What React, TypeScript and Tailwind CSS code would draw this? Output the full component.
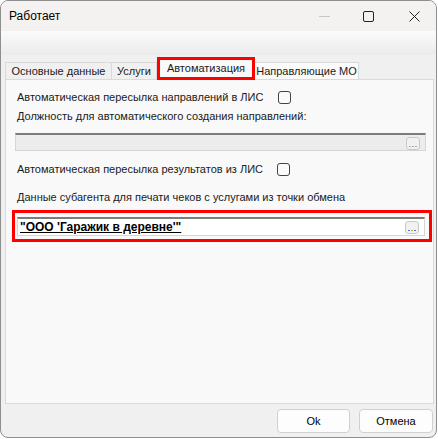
import React from "react";

function Checkbox() {
  return <div className="w-[13px] h-[13px] rounded-[3px] border border-[#444] bg-[#fbfbfb]" />;
}

function DotsButton({ colored }: { colored?: boolean }) {
  return (
    <div className="absolute right-[5px] top-[2px] w-[14px] h-[13px] rounded-[3px] border border-[#c9c9c9] bg-[#f1f1f1] flex items-end justify-center pb-[2px] gap-[1px]">
      <div className={`w-[2px] h-[1px] ${colored ? "bg-[#3d7fd8]" : "bg-[#b0b0b0]"}`} />
      <div className={`w-[2px] h-[1px] ${colored ? "bg-[#e0a020]" : "bg-[#b0b0b0]"}`} />
      <div className={`w-[2px] h-[1px] ${colored ? "bg-[#3d7fd8]" : "bg-[#b0b0b0]"}`} />
    </div>
  );
}

export default function App() {
  const font = { fontFamily: '"Liberation Sans", Arial, sans-serif' };
  return (
    <div className="w-[438px] h-[439px] bg-white" style={font}>
      <div className="w-[437px] h-[438px] border border-[#8e8e8e] rounded-[8px] overflow-hidden flex flex-col bg-[#f0f0f0] text-[11px] text-[#1a1a1a]">
        {/* title bar */}
        <div className="h-[30px] bg-[#f3f2f1] flex items-center pl-[8px] relative shrink-0">
          <span className="text-[12px] text-black">Работает</span>
          <div className="absolute left-[318px] top-[15px] w-[11px] h-[1px] bg-[#c8c8c8]" />
          <div className="absolute left-[362px] top-[10px] w-[11px] h-[11px] border border-[#222] rounded-[2px]" />
          <svg className="absolute left-[408px] top-[10px]" width="11" height="11" viewBox="0 0 11 11">
            <path d="M0.5 0.5 L10.5 10.5 M10.5 0.5 L0.5 10.5" stroke="#222" strokeWidth="1" />
          </svg>
        </div>
        {/* toolbar strip */}
        <div className="h-[24px] shrink-0 bg-gradient-to-b from-[#fbfbfb] to-[#ebebeb]" />
        {/* tabs */}
        <div className="h-[24px] shrink-0 flex items-end pl-[4px] relative">
          <div className="h-[17px] w-[107px] border border-b-0 border-[#d9d9d9] bg-[#f0f0f0] flex items-center justify-center">Основные данные</div>
          <div className="h-[17px] w-[45px] border border-b-0 border-l-0 border-[#d9d9d9] bg-[#f0f0f0] flex items-center justify-center">Услуги</div>
          <div className="h-[23px] w-[98px] -mb-[1px] border-[3px] border-[#ff0000] bg-[#f9f9f9] flex items-center justify-center relative z-10">Автоматизация</div>
          <div className="h-[17px] w-[104px] border border-b-0 border-l-0 border-[#d9d9d9] bg-[#fbfbfb] flex items-center justify-center">Направляющие МО</div>
        </div>
        {/* panel */}
        <div className="mx-[4px] w-[429px] h-[325px] border border-[#dadada] bg-[#f9f9f9] flex flex-col pt-[9px] shrink-0">
          <div className="h-[16px] flex items-center pl-[11px]">
            <span>Автоматическая пересылка направлений в ЛИС</span>
            <div className="ml-[15px]"><Checkbox /></div>
          </div>
          <div className="h-[16px] mt-[3px] flex items-center pl-[11px]">Должность для автоматического создания направлений:</div>
          <div className="relative mt-[9px] ml-[9px] w-[411px] h-[18px] bg-[#ececec] border border-[#d5d5d5] border-t-[#7c7c7c] border-t-[2px]">
            <DotsButton />
          </div>
          <div className="h-[16px] mt-[10px] flex items-center pl-[11px]">
            <span>Автоматическая пересылка результатов из ЛИС</span>
            <div className="ml-[14px]"><Checkbox /></div>
          </div>
          <div className="h-[16px] mt-[12px] flex items-center pl-[11px]">Данные субагента для печати чеков с услугами из точки обмена</div>
          <div className="mt-[5px] ml-[6px] w-[420px] h-[32px] border-[3px] border-[#ff0000] flex items-center pl-[2px]">
            <div className="relative w-[408px] h-[19px] bg-white border border-[#d5d5d5] border-t-[#7c7c7c] border-t-[2px] flex items-center pl-[2px]">
              <span className="font-bold underline text-[12px] text-black">"ООО 'Гаражик в деревне'"</span>
              <DotsButton colored />
            </div>
          </div>
        </div>
        {/* footer */}
        <div className="flex-1 flex items-start justify-end pr-[3px] pt-[5px] gap-[9px]">
          <button className="w-[73px] h-[24px] rounded-[4px] border border-[#d0d0d0] bg-[#fdfdfd] text-[11px] text-black">Ok</button>
          <button className="w-[74px] h-[24px] rounded-[4px] border border-[#d0d0d0] bg-[#fdfdfd] text-[11px] text-black">Отмена</button>
        </div>
      </div>
    </div>
  );
}
